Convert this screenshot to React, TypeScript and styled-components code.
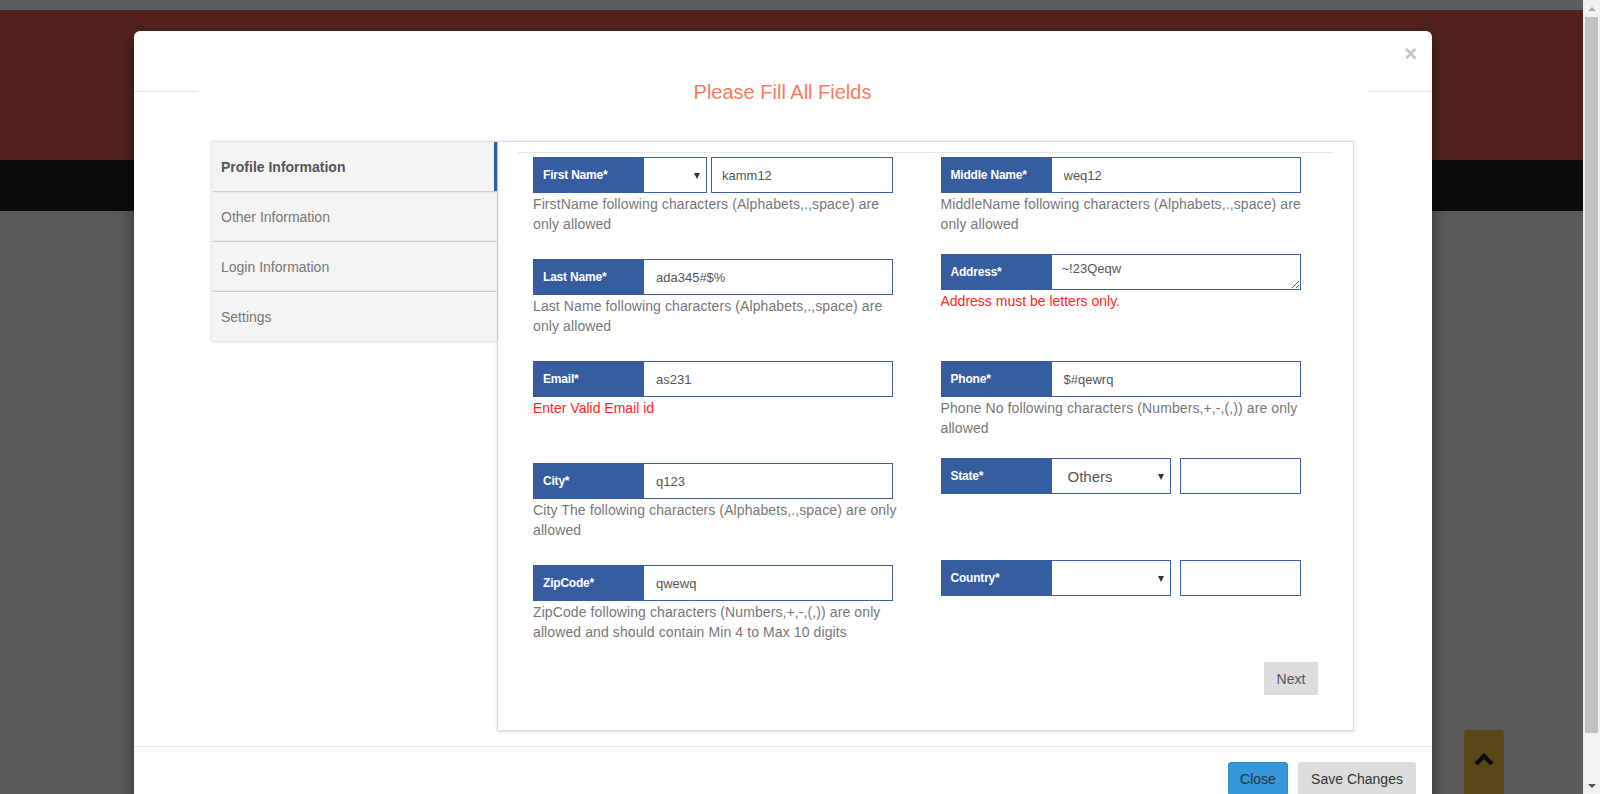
import styled, { createGlobalStyle } from "styled-components";

const GlobalStyle = createGlobalStyle`
  html, body {
    margin: 0;
    padding: 0;
    overflow: hidden;
    font-family: "Liberation Sans", Arial, sans-serif;
  }
  * {
    box-sizing: border-box;
  }
`;

type FieldData = {
  label: string;
  value?: string;
  kind?: "input" | "textarea" | "select-input" | "select-box";
  selectValue?: string;
  selectWidth?: number;
  help?: string;
  error?: string;
  height: number;
};

const leftFields: FieldData[] = [
  {
    label: "First Name*",
    value: "kamm12",
    kind: "select-input",
    selectValue: "",
    selectWidth: 64,
    help: "FirstName following characters (Alphabets,.,space) are only allowed",
    height: 102,
  },
  {
    label: "Last Name*",
    value: "ada345#$%",
    help: "Last Name following characters (Alphabets,.,space) are only allowed",
    height: 102,
  },
  { label: "Email*", value: "as231", error: "Enter Valid Email id", height: 102 },
  {
    label: "City*",
    value: "q123",
    help: "City The following characters (Alphabets,.,space) are only allowed",
    height: 102,
  },
  {
    label: "ZipCode*",
    value: "qwewq",
    help: "ZipCode following characters (Numbers,+,-,(,)) are only allowed and should contain Min 4 to Max 10 digits",
    height: 76,
  },
];

const rightFields: FieldData[] = [
  {
    label: "Middle Name*",
    value: "weq12",
    help: "MiddleName following characters (Alphabets,.,space) are only allowed",
    height: 97,
  },
  {
    label: "Address*",
    value: "~!23Qeqw",
    kind: "textarea",
    error: "Address must be letters only.",
    height: 107,
  },
  {
    label: "Phone*",
    value: "$#qewrq",
    help: "Phone No following characters (Numbers,+,-,(,)) are only allowed",
    height: 97,
  },
  { label: "State*", kind: "select-box", selectValue: "Others", selectWidth: 120, height: 102 },
  { label: "Country*", kind: "select-box", selectValue: "", selectWidth: 120, height: 36 },
];

const tabs = ["Profile Information", "Other Information", "Login Information", "Settings"];

const Field = ({ f }: { f: FieldData }) => (
  <FieldBlock $h={f.height}>
    <InputGroup>
      <Addon>{f.label}</Addon>
      {f.kind === "textarea" && <TextArea defaultValue={f.value} />}
      {(f.kind === undefined || f.kind === "input") && <TextInput defaultValue={f.value} />}
      {f.kind === "select-input" && (
        <>
          <SelectBox $w={f.selectWidth || 64}>
            <SelectText $big={false}>{f.selectValue}</SelectText>
            <Caret />
          </SelectBox>
          <TextInput defaultValue={f.value} $gap={4} $pad={10} />
        </>
      )}
      {f.kind === "select-box" && (
        <>
          <SelectBox $w={f.selectWidth || 120}>
            <SelectText $big>{f.selectValue}</SelectText>
            <Caret />
          </SelectBox>
          <TextInput $gap={9} />
        </>
      )}
    </InputGroup>
    {f.help && <Help>{f.help}</Help>}
    {f.error && <ErrorText>{f.error}</ErrorText>}
  </FieldBlock>
);

const App = () => {
  return (
    <>
      <GlobalStyle />
      <Page>
        <Viewport>
          <TopStrip />
          <SiteHeader />
          <SiteNav />
          <SiteBody />

          <Modal>
            <ModalHeader>
              <CloseX>×</CloseX>
            </ModalHeader>
            <Title>Please Fill All Fields</Title>

            <ModalBody>
              <Tabs>
                {tabs.map((t, i) => (
                  <Tab key={t} $active={i === 0}>
                    {t}
                  </Tab>
                ))}
              </Tabs>

              <Panel>
                <Rule />
                <FormGrid>
                  <Column>
                    {leftFields.map((f) => (
                      <Field key={f.label} f={f} />
                    ))}
                  </Column>
                  <Column>
                    {rightFields.map((f) => (
                      <Field key={f.label} f={f} />
                    ))}
                  </Column>
                </FormGrid>
                <ButtonRow>
                  <GreyButton $w={54} $h={33}>
                    Next
                  </GreyButton>
                </ButtonRow>
              </Panel>
            </ModalBody>

            <ModalFooter>
              <BlueButton>Close</BlueButton>
              <GreyButton $w={118} $h={34} $dark>
                Save Changes
              </GreyButton>
            </ModalFooter>
          </Modal>

          <ScrollTop>
            <svg width="22" height="14" viewBox="0 0 22 14">
              <polyline
                points="3,12 11,4 19,12"
                fill="none"
                stroke="#0d0d0d"
                strokeWidth="4.5"
              />
            </svg>
          </ScrollTop>
        </Viewport>

        <Scrollbar>
          <ScrollArrow $up />
          <ScrollThumb />
          <ScrollArrow $up={false} />
        </Scrollbar>
      </Page>
    </>
  );
};

const Page = styled.div`
  display: flex;
  width: 1600px;
  height: 794px;
  overflow: hidden;
`;

const Viewport = styled.div`
  position: relative;
  flex: 1;
  display: flex;
  flex-direction: column;
`;

const TopStrip = styled.div`
  height: 10px;
  background: #5c5c5c;
`;

const SiteHeader = styled.div`
  height: 150px;
  background: #52231e;
`;

const SiteNav = styled.div`
  height: 51px;
  background: #0c0c0c;
`;

const SiteBody = styled.div`
  flex: 1;
  background: #5a5a5a;
`;

const Modal = styled.div`
  position: absolute;
  left: 134px;
  top: 31px;
  width: 1298px;
  background: #fff;
  border-radius: 6px;
  box-shadow: 0 5px 15px rgba(0, 0, 0, 0.5);
`;

const ModalHeader = styled.div`
  height: 61px;
  border-bottom: 1px solid #e5e5e5;
  display: flex;
  justify-content: flex-end;
  align-items: flex-start;
  padding: 12px 15px 0;
`;

const CloseX = styled.span`
  font-size: 22px;
  font-weight: bold;
  line-height: 1;
  color: #c4c4c4;
`;

const Title = styled.h3`
  margin: -15px 65px 0 64px;
  background: #fff;
  height: 30px;
  line-height: 30px;
  text-align: center;
  font-size: 20px;
  font-weight: normal;
  color: #fa7a5e;
`;

const ModalBody = styled.div`
  display: flex;
  align-items: flex-start;
  padding: 34px 78px 15px;
`;

const Tabs = styled.div`
  width: 285px;
  flex-shrink: 0;
  display: flex;
  flex-direction: column;
  padding-top: 1px;
`;

const Tab = styled.div<{ $active: boolean }>`
  height: 49px;
  display: flex;
  align-items: center;
  padding-left: 9px;
  background: #f4f4f4;
  box-shadow: 0 0 3px rgba(0, 0, 0, 0.28);
  margin-bottom: 1px;
  font-size: 14px;
  color: ${(p) => (p.$active ? "#555" : "#777")};
  font-weight: ${(p) => (p.$active ? "bold" : "normal")};
  border-right: 3px solid ${(p) => (p.$active ? "#2a5db0" : "transparent")};
  position: relative;
  z-index: ${(p) => (p.$active ? 2 : 1)};
`;

const Panel = styled.div`
  flex: 1;
  border: 1px solid #dcdcdc;
  box-shadow: 0 1px 3px rgba(0, 0, 0, 0.15);
  padding: 10px 20px 35px;
  background: #fff;
`;

const Rule = styled.div`
  border-top: 1px solid #e5e5e5;
  margin-bottom: 4px;
`;

const FormGrid = styled.div`
  display: grid;
  grid-template-columns: 1fr 1fr;
`;

const Column = styled.div`
  padding: 0 15px;
  display: flex;
  flex-direction: column;
`;

const FieldBlock = styled.div<{ $h: number }>`
  height: ${(p) => p.$h}px;
`;

const InputGroup = styled.div`
  display: flex;
  width: 360px;
  height: 36px;
`;

const Addon = styled.div`
  width: 110px;
  flex-shrink: 0;
  display: flex;
  align-items: center;
  padding-left: 10px;
  background: #365d9f;
  color: #fff;
  font-size: 12px;
  font-weight: bold;
  letter-spacing: -0.2px;
`;

const TextInput = styled.input<{ $gap?: number; $pad?: number }>`
  flex: 1;
  min-width: 0;
  margin-left: ${(p) => p.$gap || 0}px;
  height: 36px;
  border: 1px solid #3a5fa3;
  padding: 0 ${(p) => p.$pad ?? 12}px;
  font-family: "Liberation Sans", Arial, sans-serif;
  font-size: 13px;
  color: #555;
  outline: none;
  background: #fff;
`;

const TextArea = styled.textarea`
  flex: 1;
  height: 36px;
  border: 1px solid #3a5fa3;
  padding: 6px 10px;
  font-family: "Liberation Sans", Arial, sans-serif;
  font-size: 13px;
  color: #555;
  outline: none;
  resize: vertical;
`;

const SelectBox = styled.div<{ $w: number }>`
  position: relative;
  width: ${(p) => p.$w}px;
  flex-shrink: 0;
  height: 36px;
  border: 1px solid #3a5fa3;
  background: #fff;
  display: flex;
  align-items: center;
`;

const SelectText = styled.span<{ $big: boolean }>`
  padding-left: 16px;
  font-size: ${(p) => (p.$big ? "15px" : "13px")};
  color: #555;
`;

const Caret = styled.span`
  position: absolute;
  right: 6px;
  top: 15px;
  width: 0;
  height: 0;
  border-left: 3.5px solid transparent;
  border-right: 3.5px solid transparent;
  border-top: 6px solid #333;
`;

const Help = styled.div`
  width: 370px;
  font-size: 14px;
  line-height: 20px;
  letter-spacing: 0.1px;
  color: #777;
  margin-top: 1px;
`;

const ErrorText = styled.div`
  font-size: 14px;
  line-height: 20px;
  color: #ff2424;
  margin-top: 1px;
`;

const ButtonRow = styled.div`
  display: flex;
  justify-content: flex-end;
  padding-right: 15px;
  margin-top: 21px;
`;

const GreyButton = styled.button<{ $w: number; $h: number; $dark?: boolean }>`
  width: ${(p) => p.$w}px;
  height: ${(p) => p.$h}px;
  border: none;
  border-radius: ${(p) => (p.$dark ? "3px" : "0")};
  background: #dddddd;
  color: ${(p) => (p.$dark ? "#333" : "#555")};
  font-family: "Liberation Sans", Arial, sans-serif;
  font-size: 14px;
  padding: 0;
`;

const BlueButton = styled.button`
  width: 60px;
  height: 34px;
  border: 1px solid #2f8ccc;
  border-radius: 3px;
  background: #3498db;
  color: #333;
  font-family: "Liberation Sans", Arial, sans-serif;
  font-size: 14px;
  padding: 0;
`;

const ModalFooter = styled.div`
  border-top: 1px solid #e5e5e5;
  display: flex;
  justify-content: flex-end;
  gap: 10px;
  padding: 15px 16px 20px;
`;

const ScrollTop = styled.div`
  position: absolute;
  left: 1464px;
  top: 730px;
  width: 40px;
  height: 70px;
  border-radius: 4px;
  background: #5a4614;
  display: flex;
  justify-content: center;
  padding-top: 22px;
`;

const Scrollbar = styled.div`
  width: 17px;
  flex-shrink: 0;
  background: #f1f1f1;
  display: flex;
  flex-direction: column;
  align-items: center;
`;

const ScrollArrow = styled.div<{ $up: boolean }>`
  height: 17px;
  width: 17px;
  display: flex;
  align-items: center;
  justify-content: center;
  &::after {
    content: "";
    width: 0;
    height: 0;
    border-left: 4px solid transparent;
    border-right: 4px solid transparent;
    ${(p) =>
      p.$up ? "border-bottom: 4px solid #a3a3a3;" : "border-top: 4px solid #505050;"}
  }
`;

const ScrollThumb = styled.div`
  width: 13px;
  height: 716px;
  background: #c1c1c1;
  margin-bottom: auto;
`;

export default App;
